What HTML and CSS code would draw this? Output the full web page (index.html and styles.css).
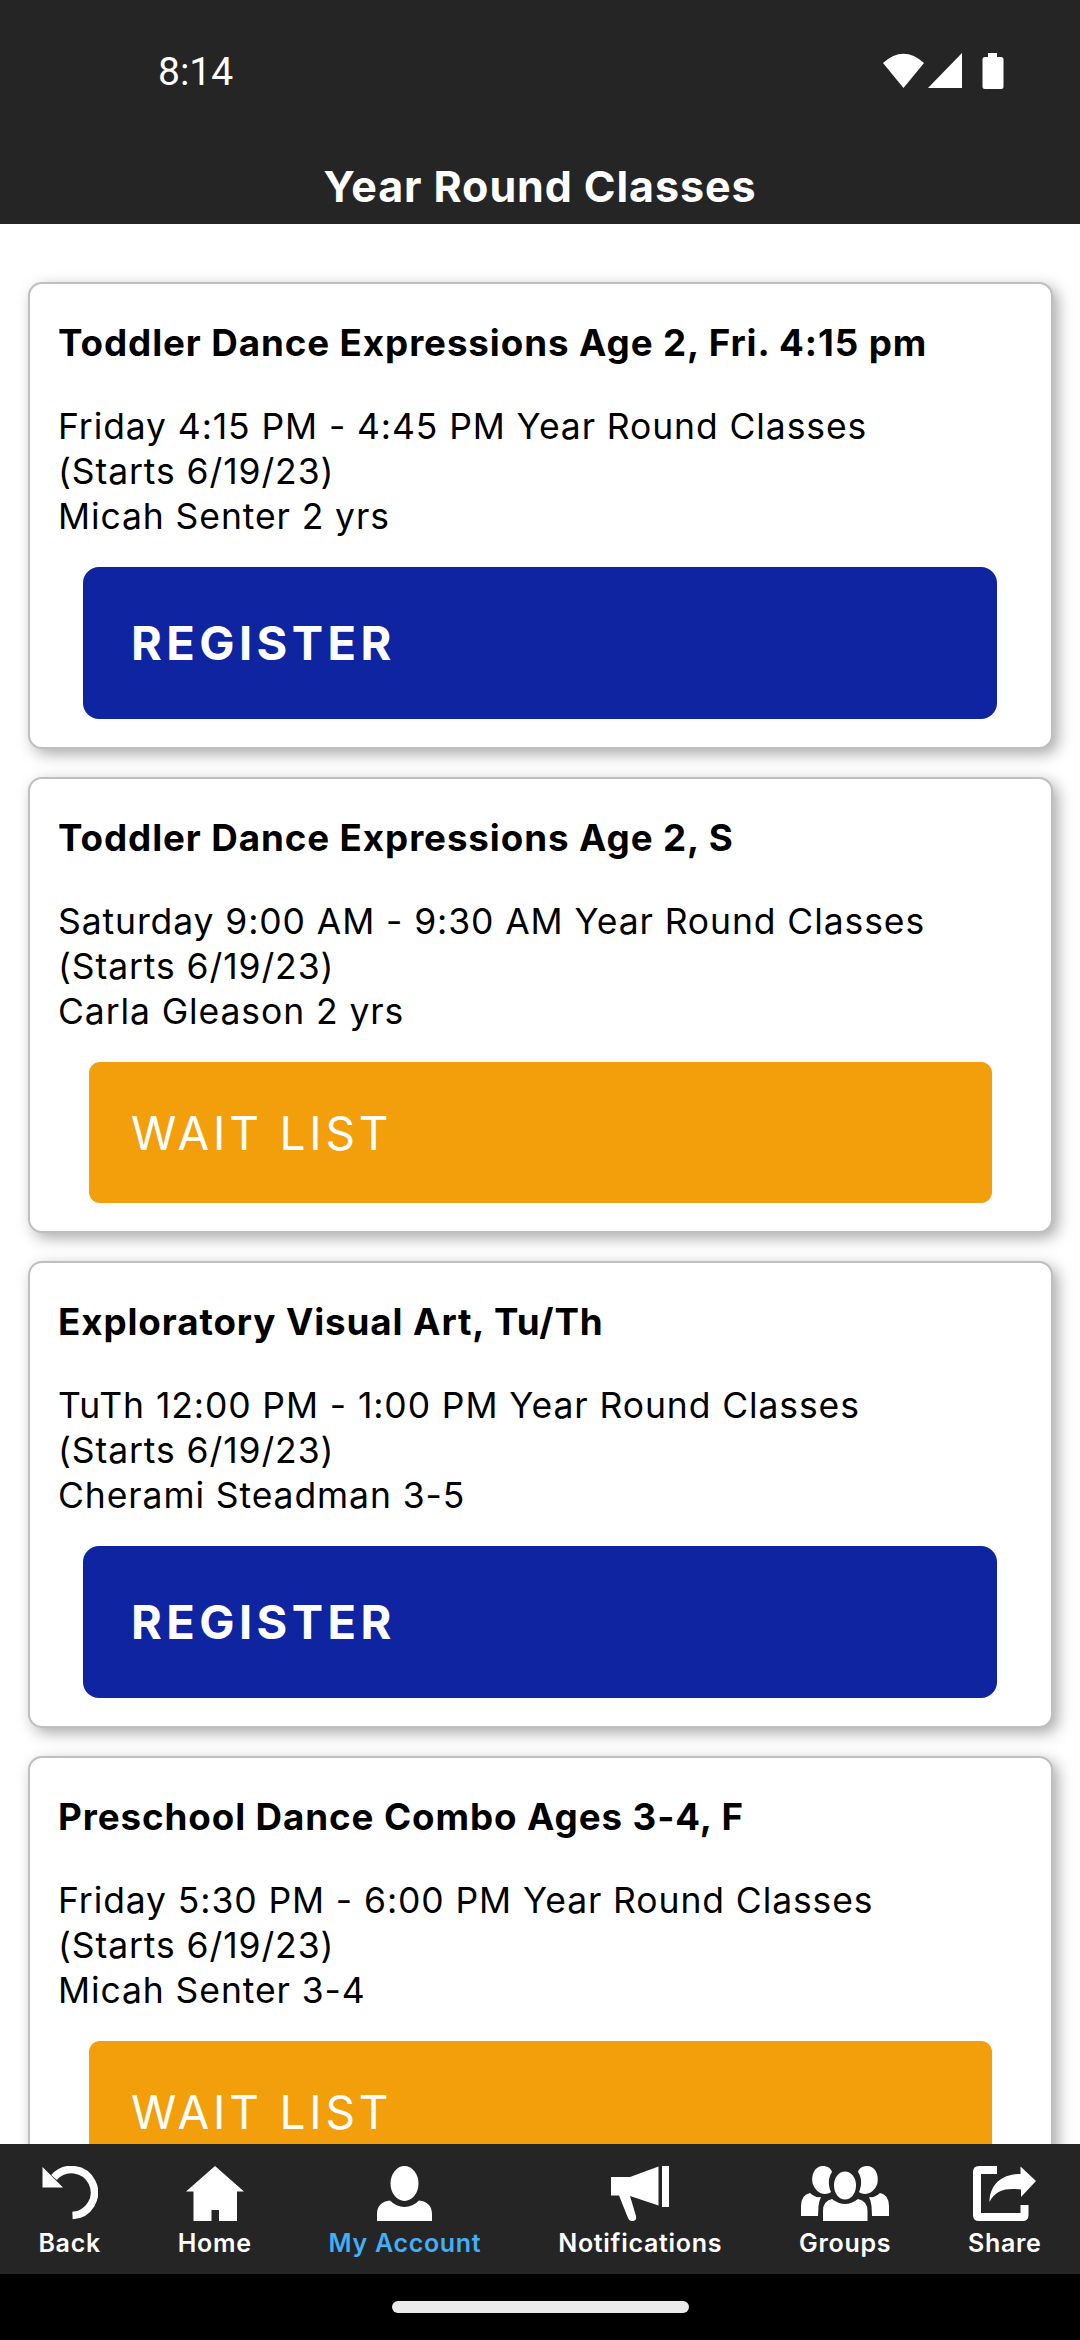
FILE: index.html
```html
<!DOCTYPE html>
<html lang="en">
<head>
    <meta charset="UTF-8">
    <meta name="viewport" content="width=device-width, initial-scale=1.0">
    <title>Year Round Classes</title>
    <link rel="stylesheet" href="styles.css">
</head>
<body>
    <header class="header">
        <div class="status-bar">
            <span class="time">8:14</span>
            <svg class="status-icons" width="122" height="38" viewBox="0 0 122 38" fill="#fff">
                <path d="M0 10 Q20.500 -8.500 41 10 L20.500 35 Z"/>
                <path d="M79 0 V35 H45 Z"/>
                <path d="M105 0 h9 v4 h4 q2.500 0 2.500 2.500 v27 q0 2.500 -2.500 2.500 h-16 q-2.500 0 -2.500 -2.500 v-27 q0 -2.500 2.500 -2.500 h3 z"/>
            </svg>
        </div>
        <h1>Year Round Classes</h1>
    </header>

    <main class="class-list">
        <div class="card">
            <h2>Toddler Dance Expressions Age 2, Fri. 4:15 pm</h2>
            <p>Friday 4:15 PM - 4:45 PM Year Round Classes<br>(Starts 6/19/23)<br>Micah Senter 2 yrs</p>
            <button type="button" class="register-btn">REGISTER</button>
        </div>
        <div class="card">
            <h2>Toddler Dance Expressions Age 2, S</h2>
            <p>Saturday 9:00 AM - 9:30 AM Year Round Classes<br>(Starts 6/19/23)<br>Carla Gleason 2 yrs</p>
            <button type="button" class="waitlist-btn">WAIT LIST</button>
        </div>
        <div class="card">
            <h2>Exploratory Visual Art, Tu/Th</h2>
            <p>TuTh 12:00 PM - 1:00 PM Year Round Classes<br>(Starts 6/19/23)<br>Cherami Steadman 3-5</p>
            <button type="button" class="register-btn">REGISTER</button>
        </div>
        <div class="card">
            <h2>Preschool Dance Combo Ages 3-4, F</h2>
            <p>Friday 5:30 PM - 6:00 PM Year Round Classes<br>(Starts 6/19/23)<br>Micah Senter 3-4</p>
            <button type="button" class="waitlist-btn">WAIT LIST</button>
        </div>
    </main>

    <nav class="tab-bar">
        <a class="tab">
            <svg width="56" height="55" viewBox="0 0 56 55">
                <path d="M12 11.500 A23 23 0 1 1 30.500 49.500" fill="none" stroke="#fff" stroke-width="7.500"/>
                <path d="M0.500 1 V21.500 H21 Z" fill="#fff"/>
            </svg>
            <span>Back</span>
        </a>
        <a class="tab">
            <svg width="58" height="55" viewBox="0 0 58 55" fill="#fff">
                <path d="M29 0 L58 25.500 H51 V55 H33 V44 H25.500 V55 H7.500 V25.500 H0 Z"/>
            </svg>
            <span>Home</span>
        </a>
        <a class="tab active">
            <svg width="55" height="55" viewBox="0 0 55 55" fill="#fff">
                <ellipse cx="27.500" cy="17.500" rx="14" ry="17.500"/>
                <path d="M0 55 V48 C0 40 5 35 13 34.500 C21 43 34 43 42 34.500 C50 35 55 40 55 48 V55 Z"/>
            </svg>
            <span>My Account</span>
        </a>
        <a class="tab">
            <svg width="58" height="55" viewBox="0 0 58 55" fill="#fff">
                <path d="M0 11 H19 L47.500 0.500 V39.500 L19 30 L25 50 Q26 54 22.500 55 H20 Q18 54.500 17 52 L8 29.500 H0 Z"/>
                <rect x="51" y="0" width="7" height="41"/>
            </svg>
            <span>Notifications</span>
        </a>
        <a class="tab">
            <svg width="88" height="55" viewBox="0 0 88 55" fill="#fff">
                <path d="M31 6 C27 12 27 19 30 26 C23 31 14 26 11.500 17 C10 8 14 0 22 0 C26 0 30 2 31 6 Z"/>
                <path d="M57 6 C61 12 61 19 58 26 C65 31 74 26 76.500 17 C78 8 74 0 66 0 C62 0 58 2 57 6 Z"/>
                <ellipse cx="44" cy="19.500" rx="11" ry="14"/>
                <path d="M0 50 V40 Q0 29 9 27 Q14 32 20 31 Q18 35 17.500 40 L17 50 Z"/>
                <path d="M88 50 V40 Q88 29 79 27 Q74 32 68 31 Q70 35 70.500 40 L71 50 Z"/>
                <path d="M22 55 V45 Q22 35 31 33 Q44 43 57 33 Q66.500 35 66.500 45 V55 Z"/>
            </svg>
            <span>Groups</span>
        </a>
        <a class="tab">
            <svg width="63" height="55" viewBox="0 0 63 55">
                <path d="M24 4 H6 Q4 4 4 6 V49 Q4 51 6 51 H49.500 Q51.500 51 51.500 49 V39" fill="none" stroke="#fff" stroke-width="8"/>
                <path d="M16.500 36 C17 18 29 8 47.500 8 V0.500 L63 15 L48 31 V23.500 C34 22 23 23 16.500 36 Z" fill="#fff"/>
            </svg>
            <span>Share</span>
        </a>
    </nav>
    <div class="gesture-area"><div class="gesture-pill"></div></div>
</body>
</html>
```
FILE: styles.css
```css
* {
    box-sizing: border-box;
}

body {
    margin: 0;
    height: 2340px;
    display: flex;
    flex-direction: column;
    overflow: hidden;
    background: #fff;
    color: #000;
    font-family: Inter, "Liberation Sans", sans-serif;
}

.header {
    height: 224px;
    flex: none;
    background: #252525;
    color: #fff;
}

.status-bar {
    height: 144px;
    padding: 0 75px 0 158px;
    display: flex;
    align-items: center;
    justify-content: space-between;
}

.time {
    font-family: Roboto, sans-serif;
    font-size: 39px;
}

.status-icons {
    margin-bottom: 1px;
}

h1 {
    margin: 0;
    font-size: 43px;
    font-weight: 700;
    line-height: 85px;
    letter-spacing: 0.9px;
    text-align: center;
}

.class-list {
    flex: 1;
    min-height: 0;
    overflow: hidden;
    padding: 58px 27px 0 28px;
}

.card {
    border: 2px solid #bfbfbf;
    border-radius: 14px;
    padding: 36px 28px 28px;
    margin-bottom: 28px;
    background: #fff;
    box-shadow: 5px 5px 15px #aaa;
}

h2 {
    margin: 0 0 38px;
    font-size: 36.75px;
    font-weight: 700;
    line-height: 46px;
    letter-spacing: 0.9px;
    white-space: nowrap;
}

p {
    margin: 0;
    font-size: 35.5px;
    line-height: 45px;
    letter-spacing: 0.9px;
    white-space: nowrap;
}

button {
    display: block;
    border: none;
    color: #fff;
    font-family: inherit;
    font-size: 46px;
    text-align: left;
    letter-spacing: 3.8px;
}

.register-btn {
    width: 914px;
    height: 152px;
    margin: 28px 0 0 25px;
    padding: 0 48px 2px;
    border-radius: 16px;
    background: #0f24a0;
    font-size: 47px;
    font-weight: 700;
    letter-spacing: 4.4px;
}

.waitlist-btn {
    width: 903px;
    height: 141px;
    margin: 28px 0 0 31px;
    padding: 0 42px;
    border-radius: 11px;
    background: #f39f0b;
}

.tab-bar {
    flex: none;
    height: 130px;
    padding-top: 22px;
    display: flex;
    justify-content: space-around;
    background: #252525;
}

.tab {
    display: flex;
    flex-direction: column;
    align-items: center;
    color: #fff;
    font-size: 25px;
    font-weight: 600;
    letter-spacing: 0.7px;
}

.tab span {
    margin-top: 7px;
    line-height: 30px;
}

.tab.active span {
    color: #43aff5;
}

.gesture-area {
    flex: none;
    height: 66px;
    padding-top: 27px;
    background: #000;
}

.gesture-pill {
    width: 297px;
    height: 12px;
    margin: 0 auto;
    border-radius: 6px;
    background: #ebebeb;
}
```
